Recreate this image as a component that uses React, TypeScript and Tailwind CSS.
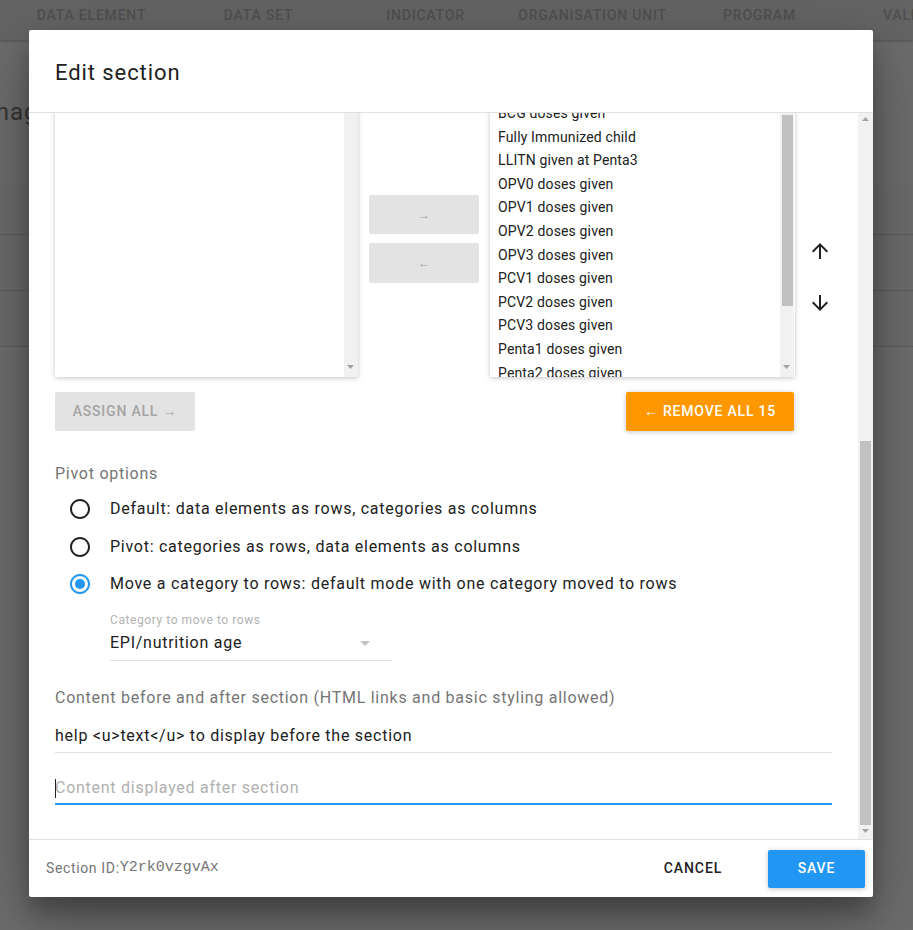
import React from "react";

const assigned = [
  "BCG doses given",
  "Fully Immunized child",
  "LLITN given at Penta3",
  "OPV0 doses given",
  "OPV1 doses given",
  "OPV2 doses given",
  "OPV3 doses given",
  "PCV1 doses given",
  "PCV2 doses given",
  "PCV3 doses given",
  "Penta1 doses given",
  "Penta2 doses given",
  "Penta3 doses given",
];

const tabs = ["Data element", "Data set", "Indicator", "Organisation unit", "Program", "Validation"];

function Tri({ up = false }: { up?: boolean }) {
  return (
    <svg width="7" height="4" viewBox="0 0 7 4" className="block">
      <path d={up ? "M0 4L3.5 0L7 4Z" : "M0 0L7 0L3.5 4Z"} fill="#a3a3a3" />
    </svg>
  );
}

function ArrowIcon({ down = false }: { down?: boolean }) {
  return (
    <svg width="24" height="24" viewBox="0 0 24 24" className={down ? "rotate-180" : ""}>
      <path d="M4 12l1.41 1.41L11 7.83V20h2V7.83l5.58 5.59L20 12l-8-8-8 8z" fill="#212121" />
    </svg>
  );
}

function Radio({ checked = false }: { checked?: boolean }) {
  const c = checked ? "#2196f3" : "#212121";
  return (
    <svg width="24" height="24" viewBox="0 0 24 24">
      <path
        d="M12 2C6.48 2 2 6.48 2 12s4.48 10 10 10 10-4.48 10-10S17.52 2 12 2zm0 18c-4.42 0-8-3.58-8-8s3.58-8 8-8 8 3.58 8 8-3.58 8-8 8z"
        fill={c}
      />
      {checked && <circle cx="12" cy="12" r="5" fill={c} />}
    </svg>
  );
}

// fake classic scrollbar track for the list boxes
function ListScroll({ thumb }: { thumb?: boolean }) {
  return (
    <div className="relative h-full w-[14px] bg-[#f1f1f1]">
      {thumb && <div className="absolute left-[2px] top-[22px] h-[191px] w-[11px] bg-[#c1c1c1]" />}
      <div className="absolute bottom-[8px] left-[3px]">
        <Tri />
      </div>
    </div>
  );
}

function RadioRow({ label, checked, h }: { label: string; checked?: boolean; h: string }) {
  return (
    <div className={`flex items-center pl-[13px] ${h}`}>
      <Radio checked={checked} />
      <span className="ml-[18px] text-[16px] tracking-[0.74px] text-[#212121]">{label}</span>
    </div>
  );
}

export default function App() {
  return (
    <div className="relative h-[930px] w-[913px] overflow-hidden bg-[#6c6c6c] font-['Roboto',sans-serif]">
      {/* page behind the dialog */}
      <div className="flex h-[40px] bg-[#646464] pl-[8px] shadow-[0_1px_3px_rgba(0,0,0,0.25)]">
        {tabs.map((t) => (
          <div key={t} className="w-[167px] shrink-0 whitespace-nowrap text-center text-[14px] font-medium uppercase leading-[30px] tracking-[0.8px] text-[#505050]">
            {t}
          </div>
        ))}
      </div>
      <div className="h-[145px] pt-[56px]">
        <div className="-ml-[40px] text-[24px] leading-[32px] tracking-[0.9px] text-[#333]">Manage sections</div>
      </div>
      <div className="border-b border-[#5b5b5b] bg-[#6a6a6a]">
        <div className="h-[50px] border-b border-[#5b5b5b]" />
        <div className="h-[56px] border-b border-[#5b5b5b]" />
        <div className="h-[55px]" />
      </div>

      {/* dialog */}
      <div className="absolute left-[29px] top-[30px] flex h-[867px] w-[844px] flex-col rounded-[2px] bg-white shadow-[0_19px_60px_rgba(0,0,0,0.3),0_15px_20px_rgba(0,0,0,0.22)]">
        <div className="h-[83px] shrink-0 border-b border-[#e0e0e0] pl-[26px] pt-[27px] text-[22px] leading-[32px] tracking-[0.92px] text-[#212121]">
          Edit section
        </div>

        <div className="flex h-[726px] shrink-0">
          <div className="w-[829px] overflow-hidden pl-[26px] pr-[26px]">
            {/* list boxes */}
            <div className="-mt-[20px] flex h-[284px]">
              <div className="flex w-[303px] justify-end bg-white shadow-[0_1px_6px_rgba(0,0,0,0.12),0_1px_4px_rgba(0,0,0,0.12)]">
                <ListScroll />
              </div>
              <div className="ml-[11px] flex w-[110px] flex-col justify-center gap-[9px] pt-[8px]">
                <div className="flex h-[39px] items-center justify-center rounded-[2px] bg-[#e3e3e3] text-[12px] text-[#a0a0a0]">→</div>
                <div className="flex h-[40px] items-center justify-center rounded-[2px] bg-[#e3e3e3] text-[12px] text-[#a0a0a0]">←</div>
              </div>
              <div className="ml-[11px] flex w-[305px] bg-white shadow-[0_1px_6px_rgba(0,0,0,0.12),0_1px_4px_rgba(0,0,0,0.12)]">
                <div className="flex-1 overflow-hidden pt-[9px]">
                  {assigned.map((a) => (
                    <div key={a} className="h-[23.6px] whitespace-nowrap pl-[8px] text-[14px] leading-[23.6px] tracking-[0.15px] text-[#212121]">
                      {a}
                    </div>
                  ))}
                </div>
                <div className="mr-[1px]">
                  <ListScroll thumb />
                </div>
              </div>
              <div className="flex flex-1 flex-col items-end gap-[28px] pt-[146px]">
                <ArrowIcon />
                <ArrowIcon down />
              </div>
            </div>

            <div className="mt-[15px] flex justify-between pr-[38px]">
              <div className="flex h-[39px] w-[140px] items-center justify-center rounded-[2px] bg-[#e3e3e3] text-[14px] font-medium tracking-[0.8px] text-[#a3a3a3]">
                ASSIGN ALL →
              </div>
              <div className="flex h-[39px] w-[168px] items-center justify-center rounded-[2px] bg-[#ff9800] text-[14px] font-medium tracking-[0.8px] text-white shadow-[0_1px_6px_rgba(0,0,0,0.12),0_1px_4px_rgba(0,0,0,0.12)]">
                ← REMOVE ALL 15
              </div>
            </div>

            <div className="mt-[31px] text-[16px] leading-[24px] tracking-[0.74px] text-[#757575]">Pivot options</div>
            <div className="mt-[4px]">
              <RadioRow h="h-[38px]" label="Default: data elements as rows, categories as columns" />
              <RadioRow h="h-[37px]" label="Pivot: categories as rows, data elements as columns" />
              <RadioRow h="h-[37px]" checked label="Move a category to rows: default mode with one category moved to rows" />
            </div>

            <div className="ml-[55px] mt-[10px] w-[282px]">
              <div className="text-[12px] leading-[16px] tracking-[0.58px] text-[#b3b3b3]">Category to move to rows</div>
              <div className="relative mt-[3px] text-[16px] leading-[24px] tracking-[0.74px] text-[#212121]">
                EPI/nutrition age
                <svg width="10" height="5" viewBox="0 0 10 5" className="absolute right-[22px] top-[10px]">
                  <path d="M0 0L10 0L5 5Z" fill="#c4c4c4" />
                </svg>
              </div>
              <div className="mt-[5px] h-[1px] bg-[#e0e0e0]" />
            </div>

            <div className="mt-[25px] text-[16px] leading-[24px] tracking-[0.74px] text-[#757575]">
              Content before and after section (HTML links and basic styling allowed)
            </div>
            <div className="mt-[14px] text-[16px] leading-[24px] tracking-[0.74px] text-[#212121]">
              help &lt;u&gt;text&lt;/u&gt; to display before the section
            </div>
            <div className="mt-[4px] h-[1px] bg-[#e0e0e0]" />
            <div className="relative mt-[23px] text-[16px] leading-[24px] tracking-[0.74px] text-[#b0b0b0]">
              <span className="absolute left-0 top-[3px] h-[19px] w-[1px] bg-[#212121]" />
              Content displayed after section
            </div>
            <div className="mt-[3px] h-[2px] bg-[#2196f3]" />
          </div>

          {/* dialog content scrollbar */}
          <div className="relative w-[15px] bg-[#f1f1f1]">
            <div className="absolute left-[4px] top-[4px]">
              <Tri up />
            </div>
            <div className="absolute left-[2px] top-[328px] h-[384px] w-[11px] bg-[#c1c1c1]" />
            <div className="absolute bottom-[6px] left-[4px]">
              <Tri />
            </div>
          </div>
        </div>

        <div className="flex flex-1 items-center border-t border-[#e0e0e0] pl-[17px] pr-[8px]">
          <span className="text-[14px] tracking-[0.64px] text-[#757575]">Section ID:</span>
          <span className="font-['Liberation_Mono',monospace] text-[15px] text-[#757575]">Y2rk0vzgvAx</span>
          <div className="flex-1" />
          <div className="mr-[30px] flex h-[36px] w-[90px] items-center justify-center text-[14px] font-medium tracking-[0.9px] text-[#212121]">CANCEL</div>
          <div className="flex h-[38px] w-[97px] items-center justify-center rounded-[2px] bg-[#2196f3] text-[14px] font-medium tracking-[0.9px] text-white shadow-[0_1px_6px_rgba(0,0,0,0.12),0_1px_4px_rgba(0,0,0,0.12)]">
            SAVE
          </div>
        </div>
      </div>
    </div>
  );
}
